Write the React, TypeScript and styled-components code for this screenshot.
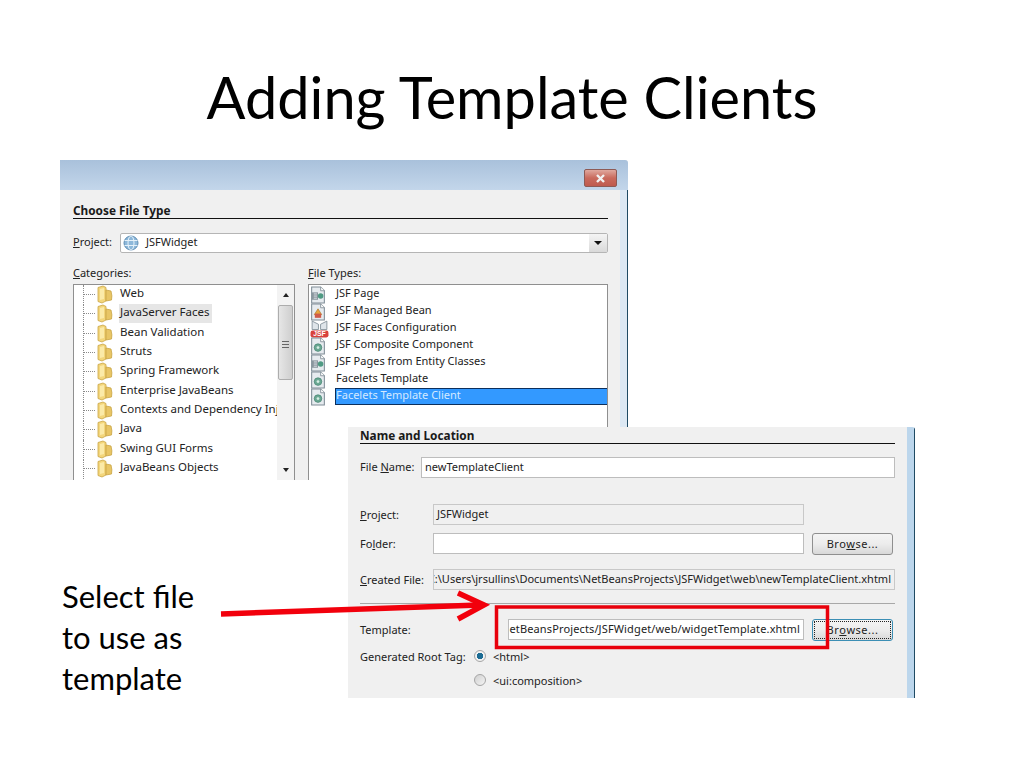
import React from 'react';
import styled, {createGlobalStyle} from 'styled-components';

const GlobalStyle = createGlobalStyle`
  html, body {
    margin: 0;
    padding: 0;
    background: #fff;
  }
`;

const categories = [
  'Web',
  'JavaServer Faces',
  'Bean Validation',
  'Struts',
  'Spring Framework',
  'Enterprise JavaBeans',
  'Contexts and Dependency Injection',
  'Java',
  'Swing GUI Forms',
  'JavaBeans Objects'
];

const fileTypes: {name: string; icon: 'page' | 'bean' | 'config' | 'facelet'}[] = [
  {name: 'JSF Page', icon: 'page'},
  {name: 'JSF Managed Bean', icon: 'bean'},
  {name: 'JSF Faces Configuration', icon: 'config'},
  {name: 'JSF Composite Component', icon: 'facelet'},
  {name: 'JSF Pages from Entity Classes', icon: 'page'},
  {name: 'Facelets Template', icon: 'facelet'},
  {name: 'Facelets Template Client', icon: 'facelet'}
];

const FolderIcon = () => (
  <TreeFolder width="16" height="19" viewBox="0 0 16 19">
    <path d="M1 2.5 L6 1 L9 2.5 L9 16 L5 18 L1 16.5 Z" fill="#f3d67c" stroke="#c9a544" strokeWidth="0.8" />
    <path d="M9 5 L14 6 Q15.5 11 14.5 15 L9 16 Z" fill="#e8c565" stroke="#c9a544" strokeWidth="0.8" />
    <path d="M3 4 L7 3 L7 14 L3 15 Z" fill="#fbeaa8" />
  </TreeFolder>
);

const PageIcon = ({kind}: {kind: 'page' | 'bean' | 'config' | 'facelet'}) => {
  if (kind === 'config') {
    return (
      <svg width="19" height="18" viewBox="0 0 18 17">
        <path d="M2 1 L8 4 L8 9 L2 9 Z M16 1 L10 4 L10 9 L16 9 Z" fill="#dfe5ea" stroke="#7f8c96" strokeWidth="0.8" />
        <rect x="0.5" y="10" width="17" height="6.5" rx="2" fill="#d8423c" />
        <text x="9" y="15.5" textAnchor="middle" fontSize="6.5" fontWeight="700" fontFamily="Liberation Sans, sans-serif" fill="#fff">
          JSF
        </text>
      </svg>
    );
  }
  return (
    <svg width="16" height="18" viewBox="0 0 14 17">
      <path d="M1 1 L9.5 1 L13 4.5 L13 16 L1 16 Z" fill="#e6ebef" stroke="#7f8c96" strokeWidth="1" />
      <path d="M9.5 1 L9.5 4.5 L13 4.5" fill="#fff" stroke="#7f8c96" strokeWidth="0.8" />
      {kind === 'facelet' && (
        <>
          <circle cx="7" cy="10" r="3.6" fill="#6aa893" stroke="#3d7d6a" strokeWidth="0.6" />
          <circle cx="7" cy="10" r="1.3" fill="#d5eee4" />
        </>
      )}
      {kind === 'page' && (
        <>
          <rect x="1" y="6" width="6" height="7" fill="#8a969e" />
          <path d="M3 7.5 L6 7.5 M3 9.5 L6 9.5 M3 11.5 L6 11.5" stroke="#e6ebef" strokeWidth="0.8" />
          <circle cx="9.5" cy="9.5" r="2.6" fill="#4f9a83" />
        </>
      )}
      {kind === 'bean' && (
        <>
          <path d="M7 5.5 L10.5 11 L3.5 11 Z" fill="#e8a53c" stroke="#a8701f" strokeWidth="0.6" />
          <rect x="4" y="10" width="6" height="4" fill="#cf5b4a" />
        </>
      )}
    </svg>
  );
};

const GlobeIcon = () => (
  <svg width="16" height="16" viewBox="0 0 16 16">
    <circle cx="8" cy="8" r="7" fill="#8db8da" stroke="#5f8db3" strokeWidth="1" />
    <ellipse cx="8" cy="8" rx="3" ry="7" fill="none" stroke="#e5f1f9" strokeWidth="1" />
    <path d="M1.5 5.5 H14.5 M1.5 10.5 H14.5" stroke="#e5f1f9" strokeWidth="1" />
  </svg>
);

const ArrowOverlay = () => (
  <Overlay width="1024" height="768" viewBox="0 0 1024 768">
    <path d="M221 614 L480 605" stroke="#f2000c" strokeWidth="5.5" fill="none" />
    <path d="M458 593 L484 605 L458 619" stroke="#f2000c" strokeWidth="5.5" fill="none" />
    <rect x="496.5" y="607" width="331" height="40.5" stroke="#e8000b" strokeWidth="3.5" fill="none" />
  </Overlay>
);

export default function App() {
  return (
    <Slide>
      <GlobalStyle />
      <Title>Adding Template Clients</Title>
      <Stage>
        <Caption>
          Select file
          <br />
          to use as
          <br />
          template
        </Caption>

        <WindowShot $left={60} $top={0} $width={568} $height={320}>
          <TitleBar>
            <CloseButton>
              <svg width="11" height="9" viewBox="0 0 11 9">
                <path d="M2 1 L9 8 M9 1 L2 8" stroke="#f1f1f1" strokeWidth="2.4" />
              </svg>
            </CloseButton>
          </TitleBar>
          <DialogBody $inset={13} $band="#dce8f3">
            <SectionTitle $top={14}>Choose File Type</SectionTitle>
            <ProjectRow>
              <ProjectLabel>
                <u>P</u>roject:
              </ProjectLabel>
              <Combo>
                <GlobeIcon />
                <ComboText>JSFWidget</ComboText>
                <ComboArrow />
              </Combo>
            </ProjectRow>
            <ListColumns>
              <ColumnLabel>
                <u>C</u>ategories:
              </ColumnLabel>
              <ColumnLabel>
                <u>F</u>ile Types:
              </ColumnLabel>
              <TreeBox>
                <TreeRows>
                  {categories.map((name, index) => (
                    <TreeRow key={name}>
                      <Connector />
                      <FolderIcon />
                      <TreeLabel $selected={index === 1}>{name}</TreeLabel>
                    </TreeRow>
                  ))}
                </TreeRows>
                <ScrollBar>
                  <ScrollUp />
                  <ScrollThumb>
                    <Grip />
                  </ScrollThumb>
                  <ScrollDown />
                </ScrollBar>
              </TreeBox>
              <FileBox>
                {fileTypes.map((file, index) => (
                  <FileRow key={file.name}>
                    <FileIconCell>
                      <PageIcon kind={file.icon} />
                    </FileIconCell>
                    <FileLabel $selected={index === fileTypes.length - 1}>{file.name}</FileLabel>
                  </FileRow>
                ))}
              </FileBox>
            </ListColumns>
          </DialogBody>
        </WindowShot>

        <WindowShot $left={348} $top={267} $width={567} $height={271}>
          <DialogBody $inset={12} $band="#bcd6ec">
            <SectionTitle $top={2}>Name and Location</SectionTitle>
            <FormRow $top={13}>
              <FileNameLabel>
                File <u>N</u>ame:
              </FileNameLabel>
              <Field>newTemplateClient</Field>
            </FormRow>
            <FormRow $top={26}>
              <FormLabel>
                <u>P</u>roject:
              </FormLabel>
              <Field $disabled $width={371}>
                JSFWidget
              </Field>
            </FormRow>
            <FormRow $top={8}>
              <FormLabel>
                Fo<u>l</u>der:
              </FormLabel>
              <Field $width={371} />
              <BrowseButton>
                Bro<u>w</u>se...
              </BrowseButton>
            </FormRow>
            <FormRow $top={15}>
              <FormLabel>
                <u>C</u>reated File:
              </FormLabel>
              <Field $disabled $clipStart>
                <span>C:\Users\jrsullins\Documents\NetBeansProjects\JSFWidget\web\newTemplateClient.xhtml</span>
              </Field>
            </FormRow>
            <Separator />
            <FormRow $top={15}>
              <TemplateLabel>Template:</TemplateLabel>
              <Field $width={296} $clipStart>
                <TemplatePath>C:/Users/jrsullins/Documents/NetBeansProjects/JSFWidget/web/widgetTemplate.xhtml</TemplatePath>
              </Field>
              <BrowseButton $focused>
                Br<u>o</u>wse...
              </BrowseButton>
            </FormRow>
            <RadioRow $top={7}>
              <RadioLabel>Generated Root Tag:</RadioLabel>
              <Radio $checked />
              <span>&lt;html&gt;</span>
            </RadioRow>
            <RadioRow $top={6}>
              <RadioLabel />
              <Radio />
              <span>&lt;ui:composition&gt;</span>
            </RadioRow>
          </DialogBody>
        </WindowShot>
      </Stage>
      <ArrowOverlay />
    </Slide>
  );
}

const Slide = styled.div`
  position: relative;
  width: 1024px;
  height: 768px;
  overflow: hidden;
  background: #fff;
  font-family: 'Lato', sans-serif;
  color: #000;
`;

const Title = styled.h1`
  margin: 0;
  height: 160px;
  padding-top: 61px;
  box-sizing: border-box;
  text-align: center;
  font-size: 57.7px;
  line-height: 72px;
  font-weight: 400;
`;

const Stage = styled.div`
  position: relative;
  height: 608px;
`;

const Caption = styled.div`
  padding: 416px 0 0 62px;
  font-size: 31px;
  line-height: 41px;
`;

const Overlay = styled.svg`
  position: absolute;
  left: 0;
  top: 0;
  pointer-events: none;
`;

const WindowShot = styled.div<{$left: number; $top: number; $width: number; $height: number}>`
  position: absolute;
  left: ${(p) => p.$left}px;
  top: ${(p) => p.$top}px;
  width: ${(p) => p.$width}px;
  height: ${(p) => p.$height}px;
  display: flex;
  flex-direction: column;
  overflow: hidden;
  border-top-right-radius: 3px;
  background: #f0f0f0;
  font-family: 'Noto Sans', sans-serif;
  font-size: 11px;
  color: #222;
`;

const TitleBar = styled.div`
  flex: 0 0 30px;
  display: flex;
  justify-content: flex-end;
  align-items: flex-start;
  padding: 9px 11px 0 0;
  box-sizing: border-box;
  background: linear-gradient(#a9c1db, #c3d6ea);
`;

const CloseButton = styled.div`
  width: 33px;
  height: 18px;
  display: flex;
  align-items: center;
  justify-content: center;
  border: 1px solid #8d5a55;
  border-radius: 2px;
  box-sizing: border-box;
  background: linear-gradient(#e0a89e, #c96a5d 50%, #bf5a4e);
`;

const DialogBody = styled.div<{$inset: number; $band: string}>`
  flex: 1;
  min-height: 0;
  padding: 0 12px 0 ${(p) => p.$inset}px;
  border-right: 8px solid ${(p) => p.$band};
  position: relative;

  &::after {
    content: '';
    position: absolute;
    top: 0;
    bottom: 0;
    right: -8px;
    width: 1px;
    background: #1f4a63;
  }
`;

const SectionTitle = styled.div<{$top: number}>`
  margin-top: ${(p) => p.$top}px;
  height: 14px;
  line-height: 12px;
  border-bottom: 1px solid #111;
  font-size: 11.8px;
  font-weight: 700;
  color: #1a1a1a;
`;

const ProjectRow = styled.div`
  margin-top: 14px;
  display: flex;
  align-items: center;
  height: 20px;
`;

const ProjectLabel = styled.div`
  width: 47px;
  padding-bottom: 3px;
`;

const Combo = styled.div`
  flex: 1;
  height: 20px;
  display: flex;
  align-items: center;
  padding-left: 2px;
  gap: 7px;
  background: #fff;
  border: 1px solid #b5b5b5;
  border-radius: 2px;
  box-sizing: border-box;
`;

const ComboText = styled.span`
  flex: 1;
  padding-bottom: 3px;
`;

const ComboArrow = styled.div`
  width: 18px;
  height: 100%;
  display: flex;
  align-items: center;
  justify-content: center;
  background: linear-gradient(#f4f4f4, #d9d9d9);

  &::before {
    content: '';
    border-left: 4px solid transparent;
    border-right: 4px solid transparent;
    border-top: 4px solid #111;
  }
`;

const ListColumns = styled.div`
  margin-top: 14px;
  display: grid;
  grid-template-columns: 222px 1fr;
  grid-template-rows: 14px 220px;
  column-gap: 13px;
  row-gap: 3px;
`;

const ColumnLabel = styled.div`
  line-height: 12px;
`;

const TreeBox = styled.div`
  display: flex;
  background: #fff;
  border: 1px solid #8f8f8f;
  box-sizing: border-box;
`;

const TreeRows = styled.div`
  flex: 1;
  min-width: 0;
  overflow: hidden;
`;

const TreeRow = styled.div`
  height: 19.3px;
  display: flex;
  align-items: center;
  white-space: nowrap;
`;

const TreeFolder = styled.svg`
  flex-shrink: 0;
`;

const Connector = styled.div`
  position: relative;
  flex: 0 0 12px;
  margin-left: 9px;
  margin-right: 2px;
  border-top: 1px dotted #8a8a8a;

  &::before {
    content: '';
    position: absolute;
    left: 0;
    top: -10px;
    height: 20px;
    border-left: 1px dotted #8a8a8a;
  }
`;

const TreeLabel = styled.span<{$selected?: boolean}>`
  margin-left: 6px;
  padding: 0 3px 4px 1px;
  font-size: 11.5px;
  line-height: 15px;
  background: ${(p) => (p.$selected ? '#e6e6e6' : 'transparent')};
`;

const ScrollBar = styled.div`
  flex: 0 0 17px;
  display: flex;
  flex-direction: column;
  align-items: stretch;
  background: #f3f3f3;
`;

const ScrollUp = styled.div`
  height: 20px;
  display: flex;
  align-items: center;
  justify-content: center;

  &::before {
    content: '';
    border-left: 3.5px solid transparent;
    border-right: 3.5px solid transparent;
    border-bottom: 4px solid #222;
  }
`;

const ScrollThumb = styled.div`
  height: 75px;
  display: flex;
  align-items: center;
  justify-content: center;
  margin: 0 1px;
  background: linear-gradient(90deg, #e6e6e6, #cfcfcf);
  border: 1px solid #adadad;
  border-radius: 2px;
  box-sizing: border-box;
`;

const Grip = styled.div`
  width: 7px;
  height: 7px;
  margin-top: 3px;
  background: repeating-linear-gradient(#666 0 1px, transparent 1px 3px);
`;

const ScrollDown = styled.div`
  margin-top: 80px;
  height: 20px;
  display: flex;
  align-items: center;
  justify-content: center;

  &::before {
    content: '';
    border-left: 3.5px solid transparent;
    border-right: 3.5px solid transparent;
    border-top: 4px solid #222;
  }
`;

const FileBox = styled.div`
  background: #fff;
  border: 1px solid #8f8f8f;
  box-sizing: border-box;
  padding-top: 1px;
`;

const FileRow = styled.div`
  height: 17px;
  display: flex;
  align-items: center;
`;

const FileIconCell = styled.div`
  flex: 0 0 26px;
  display: flex;
  justify-content: flex-start;
  padding-left: 1px;
  box-sizing: border-box;
`;

const FileLabel = styled.div<{$selected?: boolean}>`
  flex: 1;
  height: 17px;
  line-height: 11px;
  box-sizing: border-box;
  background: ${(p) => (p.$selected ? '#3399ff' : 'transparent')};
  border: 1px solid ${(p) => (p.$selected ? '#0c2f5c' : 'transparent')};
  border-right: none;
  color: ${(p) => (p.$selected ? '#d4e9ff' : 'inherit')};
`;

const FormRow = styled.div<{$top: number}>`
  margin-top: ${(p) => p.$top}px;
  display: flex;
  align-items: flex-start;
  height: 21px;
  line-height: 22px;
`;

const FormLabel = styled.div`
  flex: 0 0 73px;
`;

const FileNameLabel = styled.div`
  flex: 0 0 61px;
  line-height: 20px;
`;

const TemplateLabel = styled.div`
  flex: 0 0 148px;
`;

const Field = styled.div<{$width?: number; $disabled?: boolean; $clipStart?: boolean}>`
  flex: ${(p) => (p.$width ? `0 0 ${p.$width}px` : '1')};
  min-width: 0;
  height: 21px;
  display: flex;
  align-items: center;
  justify-content: ${(p) => (p.$clipStart ? 'flex-end' : 'flex-start')};
  padding: 0 3px 1px;
  overflow: hidden;
  white-space: nowrap;
  box-sizing: border-box;
  background: ${(p) => (p.$disabled ? '#f0f0f0' : '#fff')};
  border: 1px solid ${(p) => (p.$disabled ? '#c8c8c8' : '#bdbdbd')};

  > span {
    flex-shrink: 0;
  }
`;

const TemplatePath = styled.span`
  letter-spacing: 0.13px;
`;

const BrowseButton = styled.div<{$focused?: boolean}>`
  flex: 0 0 81px;
  height: 22px;
  margin-left: 8px;
  display: flex;
  align-items: center;
  justify-content: center;
  box-sizing: border-box;
  border-radius: 3px;
  letter-spacing: 0.5px;
  padding-bottom: 1px;
  border: 1px solid ${(p) => (p.$focused ? '#3c8fb5' : '#8f8f8f')};
  outline: ${(p) => (p.$focused ? '1px dotted #222' : 'none')};
  outline-offset: -3px;
  background: linear-gradient(#f4f4f4, #ececec 50%, #d8d8d8);
`;

const Separator = styled.div`
  margin-top: 13px;
  height: 1px;
  background: #a8a8a8;
`;

const RadioRow = styled.div<{$top: number}>`
  margin-top: ${(p) => p.$top}px;
  display: flex;
  align-items: center;
  height: 18px;
`;

const RadioLabel = styled.div`
  flex: 0 0 114px;
`;

const Radio = styled.div<{$checked?: boolean}>`
  width: 12px;
  height: 12px;
  margin-right: 7px;
  border-radius: 50%;
  box-sizing: border-box;
  border: 1px solid #a5a5a5;
  background: ${(p) =>
    p.$checked ? 'radial-gradient(circle, #1c6c94 0 3px, #f2f2f2 3.5px)' : 'linear-gradient(135deg, #d0d0d0, #f4f4f4)'};
`;
